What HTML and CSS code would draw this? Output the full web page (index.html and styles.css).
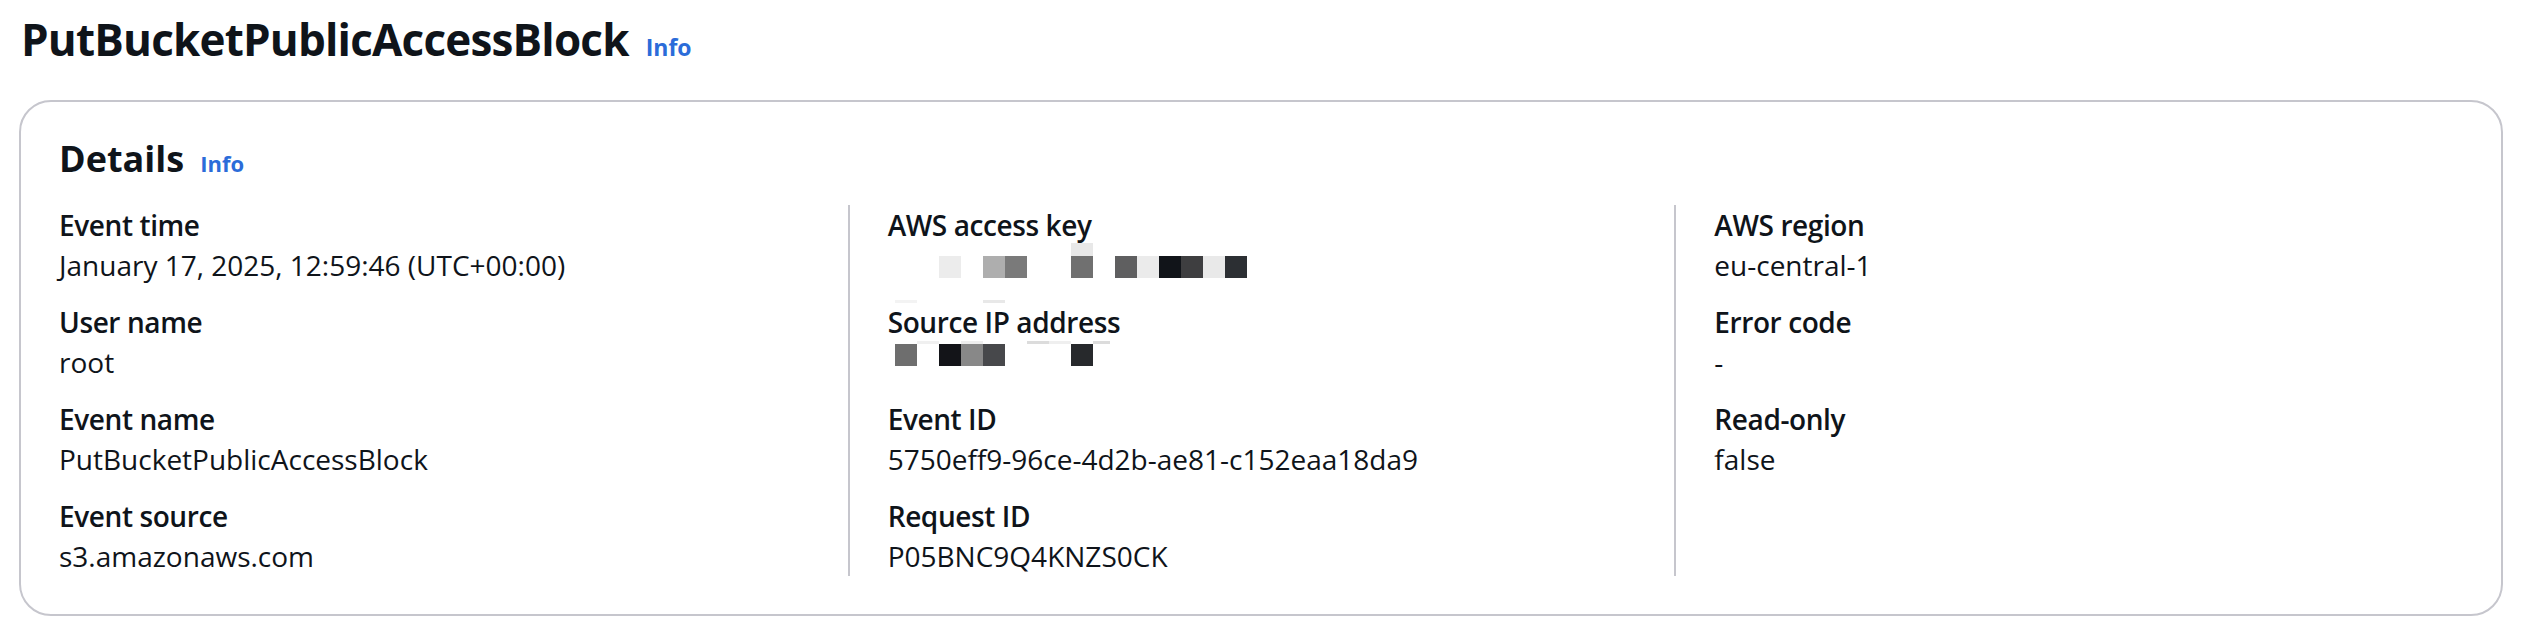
FILE: index.html
```html
<!DOCTYPE html>
<html lang="en">
<head>
<meta charset="utf-8">
<title>PutBucketPublicAccessBlock</title>
<link rel="stylesheet" href="styles.css">
</head>
<body>
<div class="page">
  <header class="page-header">
    <h1 class="title">PutBucketPublicAccessBlock</h1>
    <a class="info info-lg" href="#">Info</a>
  </header>

  <section class="card">
    <div class="card-header">
      <h2 class="card-title">Details</h2>
      <a class="info" href="#">Info</a>
    </div>

    <div class="cols">
      <div class="col">
        <div class="pair">
          <div class="label">Event time</div>
          <div class="value">January 17, 2025, 12:59:46 (UTC+00:00)</div>
        </div>
        <div class="pair">
          <div class="label">User name</div>
          <div class="value">root</div>
        </div>
        <div class="pair">
          <div class="label">Event name</div>
          <div class="value">PutBucketPublicAccessBlock</div>
        </div>
        <div class="pair">
          <div class="label">Event source</div>
          <div class="value">s3.amazonaws.com</div>
        </div>
      </div>

      <div class="col col-bordered">
        <div class="pair">
          <div class="label">AWS access key</div>
          <div class="redact redact-key">
            <div class="cells">
              <span class="cell"></span><span class="cell"></span>
              <span class="cell c-ec"></span><span class="cell"></span>
              <span class="cell c-ae"></span><span class="cell c-7a"></span>
              <span class="cell"></span><span class="cell"></span>
              <span class="cell c-70"></span><span class="cell"></span>
              <span class="cell c-5f"></span><span class="cell c-eb"></span>
              <span class="cell c-11"></span><span class="cell c-3e"></span>
              <span class="cell c-e9"></span><span class="cell c-2c"></span>
            </div>
            <span class="strip strip-key-a"></span>
            <span class="strip strip-key-b"></span>
            <span class="strip strip-key-c"></span>
          </div>
        </div>
        <div class="pair">
          <div class="label">Source IP address</div>
          <div class="redact redact-ip">
            <div class="cells">
              <span class="cell c-6e"></span><span class="cell"></span>
              <span class="cell c-13"></span><span class="cell c-88"></span>
              <span class="cell c-47"></span><span class="cell"></span>
              <span class="cell"></span><span class="cell"></span>
              <span class="cell c-27"></span>
            </div>
            <span class="strip strip-ip-a"></span>
            <span class="strip strip-ip-b"></span>
            <span class="strip strip-ip-c"></span>
            <span class="strip strip-ip-d"></span>
            <span class="strip strip-ip-e"></span>
          </div>
        </div>
        <div class="pair">
          <div class="label">Event ID</div>
          <div class="value">5750eff9-96ce-4d2b-ae81-c152eaa18da9</div>
        </div>
        <div class="pair">
          <div class="label">Request ID</div>
          <div class="value">P05BNC9Q4KNZS0CK</div>
        </div>
      </div>

      <div class="col col-bordered">
        <div class="pair">
          <div class="label">AWS region</div>
          <div class="value">eu-central-1</div>
        </div>
        <div class="pair">
          <div class="label">Error code</div>
          <div class="value">-</div>
        </div>
        <div class="pair">
          <div class="label">Read-only</div>
          <div class="value">false</div>
        </div>
      </div>
    </div>
  </section>
</div>
</body>
</html>
```

FILE: styles.css
```css
* {
  box-sizing: border-box;
}

html, body {
  margin: 0;
  padding: 0;
  background: #ffffff;
}

body {
  font-family: "Open Sans", "Noto Sans", sans-serif;
  color: #0f141a;
}

.page {
  padding: 11px 19px 0 19px;
}

.page-header {
  display: flex;
  align-items: baseline;
  gap: 17px;
  padding-left: 2px;
  margin-bottom: 33px;
}

.title {
  margin: 0;
  font-size: 44px;
  line-height: 56px;
  font-weight: 700;
  letter-spacing: -0.8px;
  color: #0f141a;
}

.info {
  font-size: 22px;
  font-weight: 700;
  color: #2b6cd9;
  text-decoration: none;
}

.info-lg {
  font-size: 23px;
}

.card {
  border: 2px solid #c6c6cd;
  border-radius: 32px;
  padding: 35px 38px 38px 38px;
  background: #ffffff;
}

.card-header {
  display: flex;
  align-items: baseline;
  gap: 16px;
  margin-bottom: 24px;
}

.card-title {
  margin: 0;
  font-size: 36px;
  line-height: 44px;
  font-weight: 700;
  color: #0f141a;
}

.cols {
  display: grid;
  grid-template-columns: repeat(3, 1fr);
  margin: 0 -38px;
}

.col {
  display: flex;
  flex-direction: column;
  gap: 17px;
  padding-left: 38px;
}

.col-bordered {
  border-left: 2px solid #c6c6cd;
}

.pair {
  display: flex;
  flex-direction: column;
}

.label {
  font-size: 28px;
  line-height: 40px;
  font-weight: 600;
  letter-spacing: -0.4px;
  color: #0f141a;
}

.value {
  font-size: 28px;
  line-height: 40px;
  font-weight: 400;
  color: #0f141a;
}

.redact {
  position: relative;
  height: 40px;
  padding-left: 7px;
}

.cells {
  display: flex;
  height: 22px;
}

.redact-key .cells {
  margin-top: 11px;
}

.redact-ip .cells {
  margin-top: 2px;
}

.cell {
  width: 22px;
  height: 22px;
  flex: none;
}

.c-ec { background: #ececec; }
.c-ae { background: #aeaeae; }
.c-7a { background: #7a7a7a; }
.c-70 { background: #707070; }
.c-5f { background: #5f5f60; }
.c-eb { background: #ebebeb; }
.c-11 { background: #111419; }
.c-3e { background: #3e3e40; }
.c-e9 { background: #e9e9e9; }
.c-2c { background: #2c2f33; }
.c-6e { background: #6e6e6e; }
.c-13 { background: #131418; }
.c-88 { background: #888888; }
.c-47 { background: #47484b; }
.c-27 { background: #27292c; }

.strip {
  position: absolute;
  width: 22px;
  height: 3px;
}

.strip-key-a { left: 183px; top: -2px; height: 13px; background: #e8e8e8; }
.strip-key-b { left: 7px; top: 55px; background: #f3f3f3; }
.strip-key-c { left: 95px; top: 55px; background: #e8e8e8; }

.strip-ip-a { left: 29px; top: -1px; background: #f0f0f0; }
.strip-ip-b { left: 73px; top: -1px; background: #eeeeee; }
.strip-ip-c { left: 139px; top: -1px; background: #dcdcdc; }
.strip-ip-d { left: 161px; top: -1px; background: #efefef; }
.strip-ip-e { left: 205px; top: -1px; width: 17px; background: #dcdcdc; }
```
